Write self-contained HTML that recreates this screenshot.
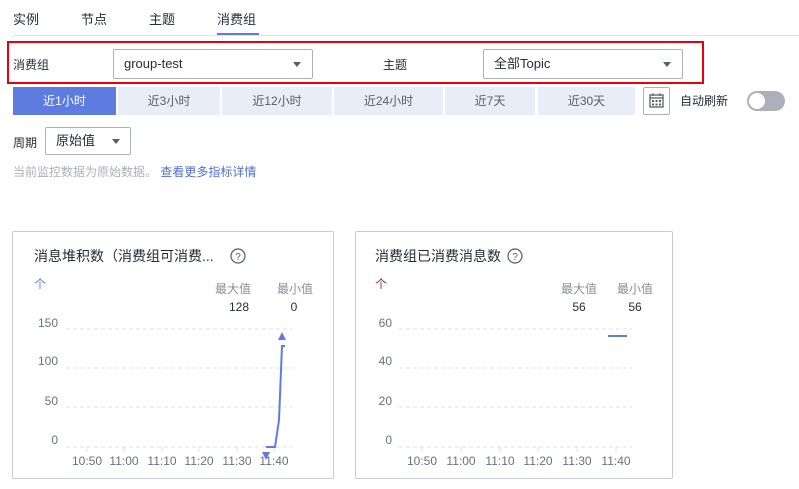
<!DOCTYPE html><html><head><meta charset="utf-8"><style>
*{margin:0;padding:0;box-sizing:border-box}
body{width:799px;height:489px;background:#fff;font-family:"Liberation Sans","Noto Sans CJK SC",sans-serif;font-size:12px;color:#252b3a;position:relative;overflow:hidden}
.a{position:absolute;white-space:nowrap}
.sel{position:absolute;border:1px solid #adb0b8;border-radius:2px;height:30px;background:#fff}
.sel span{position:absolute;left:10px;top:0;line-height:28px;font-size:13px}
.tri{position:absolute;width:0;height:0;border-left:4.5px solid transparent;border-right:4.5px solid transparent;border-top:5px solid #575d6c}
.tb{position:absolute;top:87px;height:28px;background:#e9edf8;color:#575d6c;text-align:center;line-height:28px;font-size:12px}
.card{position:absolute;top:231px;height:248px;border:1px solid #c8cad0;border-radius:2px}
.g{fill:none;stroke:#dfe1e6;stroke-dasharray:4 3}
.lab{font-size:12px;fill:#6b707d;font-family:"Liberation Sans",sans-serif}
</style></head><body>
<div class="a" style="left:13px;top:9px;font-size:13px">实例</div>
<div class="a" style="left:81px;top:9px;font-size:13px">节点</div>
<div class="a" style="left:149px;top:9px;font-size:13px">主题</div>
<div class="a" style="left:217px;top:9px;font-size:13px;color:#252b3a">消费组</div>
<div class="a" style="left:217px;top:33px;width:42px;height:3px;background:#5e7ce0"></div>
<div class="a" style="left:13px;top:35px;width:786px;height:1px;background:#dfe1e6"></div>
<div class="a" style="left:7px;top:41px;width:697px;height:43px;border:2px solid #e8000b"></div>
<div class="a" style="left:13px;top:56px">消费组</div>
<div class="sel" style="left:113px;top:49px;width:200px"><span>group-test</span><div class="tri" style="right:11px;top:12px"></div></div>
<div class="a" style="left:383px;top:56px">主题</div>
<div class="sel" style="left:483px;top:49px;width:200px"><span>全部Topic</span><div class="tri" style="right:11px;top:12px"></div></div>
<div class="tb" style="left:13px;width:103px;background:#5e7ce0;color:#fff">近1小时</div>
<div class="tb" style="left:118px;width:102px">近3小时</div>
<div class="tb" style="left:222px;width:110px">近12小时</div>
<div class="tb" style="left:334px;width:109px">近24小时</div>
<div class="tb" style="left:445px;width:90px">近7天</div>
<div class="tb" style="left:538px;width:97px">近30天</div>
<div class="a" style="left:643px;top:87px;width:27px;height:28px;border:1px solid #adb0b8;border-radius:2px">
<svg width="25" height="26" viewBox="0 0 25 26"><rect x="6" y="7" width="13" height="12" fill="none" stroke="#575d6c" stroke-width="1.3"/><line x1="6" y1="10" x2="19" y2="10" stroke="#575d6c" stroke-width="1.3"/><line x1="9" y1="5" x2="9" y2="8" stroke="#575d6c"/><line x1="16" y1="5" x2="16" y2="8" stroke="#575d6c"/><g fill="#575d6c"><rect x="8" y="12" width="2" height="2"/><rect x="11.5" y="12" width="2" height="2"/><rect x="15" y="12" width="2" height="2"/><rect x="8" y="15.5" width="2" height="2"/><rect x="11.5" y="15.5" width="2" height="2"/><rect x="15" y="15.5" width="2" height="2"/></g></svg></div>
<div class="a" style="left:680px;top:93px;line-height:16px">自动刷新</div>
<div class="a" style="left:747px;top:91px;width:38px;height:20px;border-radius:10px;background:#adb0b8"><div style="position:absolute;left:2px;top:2px;width:16px;height:16px;border-radius:50%;background:#fff"></div></div>
<div class="a" style="left:13px;top:134px">周期</div>
<div class="sel" style="left:45px;top:127px;width:86px;height:28px"><span style="left:10px;line-height:26px">原始值</span><div class="tri" style="right:10px;top:11px"></div></div>
<div class="a" style="left:13px;top:163px;color:#adb0b8">当前监控数据为原始数据。 <span style="color:#526ecc">查看更多指标详情</span></div>

<div class="card" style="left:12px;width:322px"></div>
<div class="card" style="left:355px;width:318px"></div>
<svg class="a" style="left:0;top:0" width="799" height="489">
<text x="34" y="261" font-size="14" fill="#252b3a" font-family="Liberation Sans,Noto Sans CJK SC,sans-serif">消息堆积数（消费组可消费...</text>
<circle cx="238" cy="256" r="7" fill="none" stroke="#575d6c" stroke-width="1.2"/><text x="238" y="260" font-size="10" text-anchor="middle" fill="#575d6c">?</text>
<text x="34" y="288" font-size="12" fill="#5e7ce0" font-family="Noto Sans CJK SC,sans-serif">个</text>
<text x="233" y="293" class="lab" text-anchor="middle" style="fill:#8a8e99;font-family:Noto Sans CJK SC,sans-serif">最大值</text>
<text x="295" y="293" class="lab" text-anchor="middle" style="fill:#8a8e99;font-family:Noto Sans CJK SC,sans-serif">最小值</text>
<text x="239" y="311" class="lab" text-anchor="middle" style="fill:#252b3a">128</text>
<text x="294" y="311" class="lab" text-anchor="middle" style="fill:#252b3a">0</text>
<g class="lab" text-anchor="end"><text x="58" y="327">150</text><text x="58" y="365">100</text><text x="58" y="405">50</text><text x="58" y="444">0</text></g>
<g class="g"><line x1="66" y1="329" x2="292" y2="329"/><line x1="66" y1="368" x2="292" y2="368"/><line x1="66" y1="407" x2="292" y2="407"/><line x1="66" y1="447" x2="292" y2="447"/></g>
<g stroke="#dfe1e6"><line x1="87" y1="447" x2="87" y2="452"/><line x1="124" y1="447" x2="124" y2="452"/><line x1="162" y1="447" x2="162" y2="452"/><line x1="199" y1="447" x2="199" y2="452"/><line x1="237" y1="447" x2="237" y2="452"/><line x1="274" y1="447" x2="274" y2="452"/></g>
<g class="lab" text-anchor="middle"><text x="87" y="465">10:50</text><text x="124" y="465">11:00</text><text x="162" y="465">11:10</text><text x="199" y="465">11:20</text><text x="237" y="465">11:30</text><text x="274" y="465">11:40</text></g>
<polyline points="266,447 275,447 279,420 282,346 285,346" fill="none" stroke="#5e7ce0" stroke-width="2"/>
<polygon points="278,340 286,340 282,332" fill="#5e7ce0"/>
<polygon points="262,452 270,452 266,460" fill="#5e7ce0"/>

<text x="375" y="261" font-size="14" fill="#252b3a" font-family="Liberation Sans,Noto Sans CJK SC,sans-serif">消费组已消费消息数</text>
<circle cx="515" cy="256" r="7" fill="none" stroke="#575d6c" stroke-width="1.2"/><text x="515" y="260" font-size="10" text-anchor="middle" fill="#575d6c">?</text>
<text x="375" y="288" font-size="12" fill="#8a2a6a" font-family="Noto Sans CJK SC,sans-serif">个</text>
<text x="579" y="293" class="lab" text-anchor="middle" style="fill:#8a8e99;font-family:Noto Sans CJK SC,sans-serif">最大值</text>
<text x="635" y="293" class="lab" text-anchor="middle" style="fill:#8a8e99;font-family:Noto Sans CJK SC,sans-serif">最小值</text>
<text x="579" y="311" class="lab" text-anchor="middle" style="fill:#252b3a">56</text>
<text x="635" y="311" class="lab" text-anchor="middle" style="fill:#252b3a">56</text>
<g class="lab" text-anchor="end"><text x="392" y="327">60</text><text x="392" y="365">40</text><text x="392" y="405">20</text><text x="392" y="444">0</text></g>
<g class="g"><line x1="399" y1="329" x2="632" y2="329"/><line x1="399" y1="368" x2="632" y2="368"/><line x1="399" y1="407" x2="632" y2="407"/><line x1="399" y1="447" x2="632" y2="447"/></g>
<g stroke="#dfe1e6"><line x1="422" y1="447" x2="422" y2="452"/><line x1="461" y1="447" x2="461" y2="452"/><line x1="500" y1="447" x2="500" y2="452"/><line x1="538" y1="447" x2="538" y2="452"/><line x1="577" y1="447" x2="577" y2="452"/><line x1="616" y1="447" x2="616" y2="452"/></g>
<g class="lab" text-anchor="middle"><text x="422" y="465">10:50</text><text x="461" y="465">11:00</text><text x="500" y="465">11:10</text><text x="538" y="465">11:20</text><text x="577" y="465">11:30</text><text x="616" y="465">11:40</text></g>
<line x1="608" y1="336" x2="627" y2="336" stroke="#5e7ce0" stroke-width="2"/>
</svg>
</body></html>
